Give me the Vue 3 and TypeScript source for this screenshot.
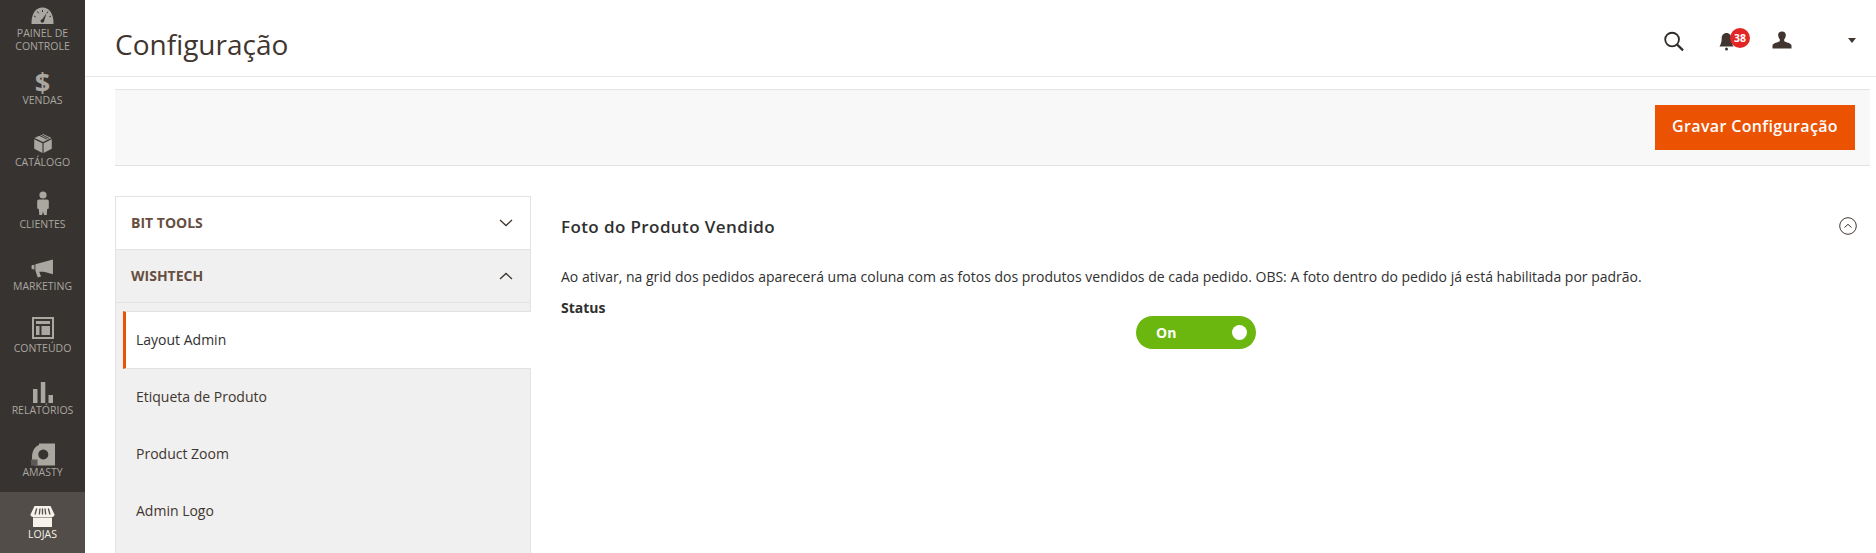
<script setup lang="ts">
interface NavItem {
  key: string
  label: string
  active?: boolean
}

const navItems: NavItem[] = [
  { key: 'dashboard', label: 'Painel de Controle' },
  { key: 'sales', label: 'Vendas' },
  { key: 'catalog', label: 'Catálogo' },
  { key: 'customers', label: 'Clientes' },
  { key: 'marketing', label: 'Marketing' },
  { key: 'content', label: 'Conteúdo' },
  { key: 'reports', label: 'Relatórios' },
  { key: 'amasty', label: 'Amasty' },
  { key: 'stores', label: 'Lojas', active: true },
]

const subItems = ['Layout Admin', 'Etiqueta de Produto', 'Product Zoom', 'Admin Logo']
</script>

<template>
  <div class="page">
    <nav class="sidebar">
      <a
        v-for="item in navItems"
        :key="item.key"
        class="nav-item"
        :class="{ 'nav-item--active': item.active, 'nav-item--first': item.key === 'dashboard' }"
      >
        <span class="nav-icon">
          <svg v-if="item.key === 'dashboard'" width="23" height="17" viewBox="0 0 23 17">
            <path d="M.5 17C.2 7 4.500.5 11.500.5S22.800 7 22.500 17z" fill="currentColor" />
            <path d="M11.500 3v2M6.500 4.500l1 1.700M17 4.500l-1 1.700M3 9l1.700 .9M20 9l-1.700 .9" stroke="#373330" stroke-width="1" />
            <path d="M15.500 6l-5 7.500 2.400 1.200z" fill="#373330" />
            <circle cx="11.300" cy="14" r="1.800" fill="#373330" />
          </svg>
          <span v-else-if="item.key === 'sales'" class="dollar">$</span>
          <svg v-else-if="item.key === 'catalog'" class="icon-up-2" width="20" height="21" viewBox="0 0 20 22">
            <path d="M10 1l9 4.200-9 4.300-9-4.300z" fill="currentColor" />
            <path d="M.8 6.600l8.600 4.200V21L.8 16.600zM19.200 6.600l-8.600 4.200V21l8.600-4.400z" fill="currentColor" />
            <path d="M5.500 2.200l9 4.400M7.500 1.300l9 4.400" stroke="#373330" stroke-width="1" />
          </svg>
          <svg v-else-if="item.key === 'customers'" class="icon-up-6" width="12" height="25" viewBox="0 0 12 25">
            <circle cx="6" cy="4" r="3.600" fill="currentColor" />
            <path d="M2 8.500h8c1 0 1.800.8 1.800 1.800v7.200l-1.600.6-.5 6H7l-1-3.600-1 3.600H2.300l-.5-6-1.600-.6v-7.200C.2 9.300 1 8.500 2 8.500z" fill="currentColor" />
          </svg>
          <svg v-else-if="item.key === 'marketing'" width="23" height="19" viewBox="0 0 24 20">
            <path d="M.5 6.500l3-.5v5l-3-.5zM4.500 5.500L23 .5v15.500l-9.500-2.500H8.500l2 5-3.500 1-2.500-7.500z" fill="currentColor" />
          </svg>
          <svg v-else-if="item.key === 'content'" class="icon-up-4" width="22" height="22" viewBox="0 0 22 22">
            <path fill-rule="evenodd" d="M0 0h22v22H0zM2 2v18h18V2z" fill="currentColor" />
            <path d="M4 4h14v3H4zM4 9h3.500v9H4zM9.500 9H18v9H9.500z" fill="currentColor" />
          </svg>
          <svg v-else-if="item.key === 'reports'" width="20" height="21" viewBox="0 0 20 21">
            <path d="M0 7h4.500v14H0zM7.800 0h4.500v21H7.800zM15.500 13H20v8h-4.500z" fill="currentColor" />
          </svg>
          <svg v-else-if="item.key === 'amasty'" width="24" height="23" viewBox="0 0 24 22">
            <path fill-rule="evenodd" d="M8 0h16v22H3.500C1.500 19.500 1 17.500 1 14 1 8 3.500 3 8 1.500zM12.300 6a5 5 0 1 0 .01 0z" fill="currentColor" />
            <path d="M0 16h6.500v6H0z" fill="#5b5855" />
          </svg>
          <svg v-else width="25" height="21" viewBox="0 0 25 21">
            <path d="M3 21V11.500h19V21z" fill="currentColor" />
            <path d="M4.500 0h16l4 8.500c0 1.500-1 2.500-2.500 2.500H3C1.500 11 .5 10 .5 8.500z" fill="currentColor" />
            <path d="M6.700 2.500L5 8.500M10 2.500L9.300 8.500M15 2.500l.7 6M18.300 2.500l1.700 6M12.500 2.500v6" stroke="#524d49" stroke-width="1.300" />
          </svg>
        </span>
        <span class="nav-label">{{ item.label }}</span>
      </a>
    </nav>

    <div class="main">
      <header class="topbar">
        <h1 class="page-title">Configuração</h1>
        <div class="topbar-actions">
          <svg class="search-icon" width="22" height="21" viewBox="0 0 22 22" fill="none" stroke="#2d2a28">
            <circle cx="9" cy="9" r="7.200" stroke-width="1.900" />
            <path d="M14.300 14.300l6.200 6" stroke-width="2.300" />
          </svg>
          <span class="bell">
            <svg width="15" height="19" viewBox="0 0 15 19">
              <path d="M7.500 1c3 0 4.800 2.300 4.800 5.500 0 3.500 1 6 2.200 8H.5c1.200-2 2.200-4.500 2.200-8C2.700 3.300 4.500 1 7.500 1z" fill="#41362f" />
              <circle cx="7.500" cy="17" r="1.500" fill="#41362f" />
            </svg>
            <span class="badge">38</span>
          </span>
          <svg class="user-icon" width="20" height="18" viewBox="0 0 20 20" preserveAspectRatio="none">
            <path d="M10 .5c2.800 0 4 2 3.800 4.500-.1 1.700-.7 3.200-1.600 4.200v2.300c1.600 1 6.800 2.200 7.300 4.500v3.500H.5V16c.5-2.300 5.700-3.500 7.300-4.500V9.200C6.900 8.200 6.300 6.700 6.200 5 6 2.500 7.200.5 10 .5z" fill="#41362f" />
          </svg>
          <span class="caret"></span>
        </div>
      </header>

      <div class="action-bar">
        <button class="save-btn" type="button">Gravar Configuração</button>
      </div>

      <div class="columns">
        <aside class="config-menu">
          <div class="tab">
            <span>Bit Tools</span>
            <svg width="14" height="8" viewBox="0 0 14 8" fill="none" stroke="#41362f" stroke-width="1.300">
              <path d="M1 1l6 5.500L13 1" />
            </svg>
          </div>
          <div class="tab tab--open">
            <span>Wishtech</span>
            <svg width="14" height="8" viewBox="0 0 14 8" fill="none" stroke="#41362f" stroke-width="1.300">
              <path d="M1 7l6-5.500L13 7" />
            </svg>
          </div>
          <ul class="sub-list">
            <li
              v-for="(sub, i) in subItems"
              :key="sub"
              class="sub-item"
              :class="{ 'sub-item--active': i === 0 }"
            >
              {{ sub }}
            </li>
          </ul>
        </aside>

        <section class="config-panel">
          <div class="panel-head">
            <h2 class="panel-title">Foto do Produto Vendido</h2>
            <svg width="18" height="18" viewBox="0 0 18 18" fill="none" stroke="#41362f">
              <circle cx="9" cy="9" r="8.300" />
              <path d="M5.500 10.500L9 7.300l3.500 3.200" />
            </svg>
          </div>
          <p class="panel-text">
            Ao ativar, na grid dos pedidos aparecerá uma coluna com as fotos dos produtos vendidos de cada pedido. OBS: A foto dentro do pedido já está habilitada por padrão.
          </p>
          <div class="status-label">Status</div>
          <div class="toggle-row">
            <div class="toggle">
              <span class="toggle-text">On</span>
              <span class="toggle-knob"></span>
            </div>
          </div>
        </section>
      </div>
    </div>
  </div>
</template>

<style>
html,
body {
  margin: 0;
  background: #fff;
}
</style>

<style scoped>
.page {
  display: flex;
  width: 1876px;
  height: 553px;
  overflow: hidden;
  font-family: 'Open Sans', sans-serif;
  color: #41362f;
}

.sidebar {
  flex: 0 0 85px;
  background: #373330;
  display: flex;
  flex-direction: column;
}
.nav-item {
  height: 62px;
  padding-top: 12px;
  box-sizing: border-box;
  flex: none;
  display: flex;
  flex-direction: column;
  align-items: center;
  color: #aaa6a0;
}
.nav-item--first {
  height: 58px;
  padding-top: 3px;
}
.nav-item--active {
  background: #524d49;
  color: #f7f3eb;
}
.nav-icon {
  height: 24px;
  display: flex;
  align-items: center;
  justify-content: center;
}
.icon-up-2 {
  margin-top: -2px;
}
.icon-up-4 {
  margin-top: -4px;
}
.icon-up-6 {
  margin-top: -6px;
}
.dollar {
  font-size: 27px;
  font-weight: 700;
  line-height: 24px;
}
.nav-label {
  width: 70px;
  font-size: 10.5px;
  line-height: 13px;
  text-align: center;
  text-transform: uppercase;
}

.main {
  flex: 1;
  min-width: 0;
  display: flex;
  flex-direction: column;
}
.topbar {
  height: 76px;
  flex: none;
  padding-left: 30px;
  border-bottom: 1px solid #e8e8e8;
  display: flex;
  align-items: center;
  justify-content: space-between;
}
.page-title {
  margin: 0;
  padding-top: 12px;
  font-size: 28px;
  font-weight: 400;
  color: #41362f;
}
.topbar-actions {
  display: flex;
  align-items: center;
  height: 100%;
}
.search-icon {
  margin-right: 34px;
  margin-top: 7px;
}
.bell {
  position: relative;
  display: flex;
  margin-right: 38px;
  margin-top: 7px;
}
.badge {
  position: absolute;
  left: 11px;
  top: -4px;
  width: 20px;
  height: 20px;
  border-radius: 50%;
  background: #e22626;
  color: #fff;
  font-size: 10.5px;
  font-weight: 700;
  line-height: 20px;
  text-align: center;
}
.user-icon {
  margin-right: 56px;
  margin-top: 4px;
}
.caret {
  width: 0;
  height: 0;
  border-left: 4px solid transparent;
  border-right: 4px solid transparent;
  border-top: 5px solid #41362f;
  margin-right: 20px;
  margin-top: 5px;
}

.action-bar {
  flex: none;
  height: 75px;
  margin: 12px 6px 0 30px;
  padding-right: 15px;
  background: #f8f8f8;
  border-top: 1px solid #e3e3e3;
  border-bottom: 1px solid #e3e3e3;
  display: flex;
  align-items: center;
  justify-content: flex-end;
}
.save-btn {
  width: 200px;
  height: 45px;
  padding: 0 0 3px;
  border: 0;
  background: #eb5202;
  color: #fff;
  font-family: inherit;
  font-size: 16px;
  font-weight: 600;
  letter-spacing: 0.35px;
}

.columns {
  display: flex;
  margin: 30px 0 0 30px;
}
.config-menu {
  flex: 0 0 416px;
  box-sizing: border-box;
  border: 1px solid #e3e3e3;
  border-bottom: 0;
  background: #f0f0f0;
  height: 400px;
}
.tab {
  height: 50px;
  padding: 0 17px 2px 15px;
  display: flex;
  align-items: center;
  justify-content: space-between;
  background: #fff;
  border-bottom: 1px solid #e3e3e3;
  font-size: 14px;
  font-weight: 700;
  text-transform: uppercase;
  color: #674e3f;
}
.tab svg {
  margin-top: 2px;
}
.tab--open {
  background: #f0f0f0;
}
.sub-list {
  list-style: none;
  margin: 8px 0 0;
  padding: 0 0 0 7px;
}
.sub-item {
  height: 55px;
  padding: 0 0 2px 13px;
  display: flex;
  align-items: center;
  font-size: 14px;
  color: #41362f;
}
.sub-item--active {
  margin-right: -1px;
  height: 54px;
  padding-left: 10px;
  background: #fff;
  border-left: 3px solid #eb5202;
  border-top: 1px solid #e3e3e3;
  border-bottom: 1px solid #e3e3e3;
  color: #303030;
}

.config-panel {
  flex: 1;
  min-width: 0;
  padding: 0 19px 0 30px;
}
.panel-head {
  display: flex;
  align-items: center;
  justify-content: space-between;
  height: 20px;
  margin-top: 20px;
}
.panel-title {
  margin: 0;
  font-size: 17px;
  font-weight: 600;
  letter-spacing: 0.4px;
  color: #303030;
}
.panel-text {
  margin: 31px 0 0;
  font-size: 14px;
  line-height: 19px;
  color: #303030;
}
.status-label {
  margin-top: 12px;
  font-size: 14px;
  font-weight: 700;
  line-height: 19px;
  color: #303030;
}
.toggle-row {
  display: flex;
  padding-left: 575px;
  margin-top: -1px;
}
.toggle {
  width: 120px;
  height: 33px;
  border-radius: 17px;
  background: #6bb70f;
  display: flex;
  align-items: center;
  justify-content: space-between;
  padding: 0 9px 0 20px;
  box-sizing: border-box;
}
.toggle-text {
  color: #fff;
  font-size: 14px;
  font-weight: 700;
}
.toggle-knob {
  width: 15px;
  height: 15px;
  border-radius: 50%;
  background: #fff;
}
</style>
